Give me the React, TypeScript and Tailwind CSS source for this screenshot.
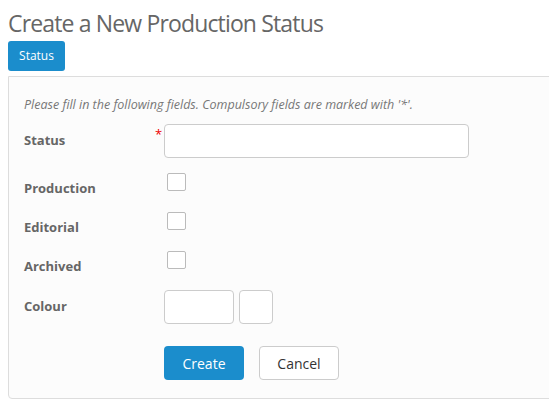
import React from "react";

const font = { fontFamily: '"Open Sans", "Liberation Sans", sans-serif' };

function Row({ label, star, children, h }: { label: string; star?: boolean; children: React.ReactNode; h: string }) {
  return (
    <div className={`flex items-center ${h}`}>
      <div className="w-[131px] shrink-0 text-[13px] font-bold text-[#666]">{label}</div>
      <div className="w-[9px] shrink-0 self-start text-[13px] leading-none text-[#e00] mt-[4px]">{star ? "*" : ""}</div>
      {children}
    </div>
  );
}

function Check({ label }: { label: string }) {
  return (
    <div className="flex h-[24px]">
      <div className="w-[142px] shrink-0 text-[13px] font-bold text-[#666] self-end leading-[18px]">{label}</div>
      <div className="ml-[1px] w-[19px] h-[18px] border border-[#bbb] rounded-[2px] bg-white" />
    </div>
  );
}

export default function App() {
  return (
    <div style={font} className="bg-white w-[549px] h-[417px] overflow-hidden pl-[8px]">
      <h1 className="text-[23px] leading-[32px] pt-[7px] text-[#666] font-medium tracking-[-0.85px]">Create a New Production Status</h1>
      <div className="mt-[2px]">
        <button className="h-[30px] w-[57px] rounded-[3px] bg-[#1b8dcc] text-white text-[12px]">Status</button>
      </div>
      <div className="mt-[5px] w-[560px] h-[323px] border border-[#ddd] rounded-bl-[4px] bg-[#fcfcfc] pl-[15px] pt-[16px]">
        <p className="text-[12.5px] italic text-[#777] leading-[24px]">
          Please fill in the following fields. Compulsory fields are marked with '*'.
        </p>
        <div className="mt-[7px]">
          <Row label="Status" star h="h-[34px]">
            <input className="w-[305px] h-[34px] rounded-[4px] border border-[#ccc] bg-white" />
          </Row>
          <div className="h-[15px]" />
          <Check label="Production" />
          <div className="h-[15px]" />
          <Check label="Editorial" />
          <div className="h-[15px]" />
          <Check label="Archived" />
          <div className="h-[15px]" />
          <Row label="Colour" h="h-[34px]">
            <div className="w-[70px] h-[34px] rounded-[4px] border border-[#ccc] bg-white" />
            <div className="ml-[5px] w-[34px] h-[34px] rounded-[4px] border border-[#ccc] bg-white" />
          </Row>
          <div className="flex mt-[22px] pl-[140px] gap-[15px]">
            <button className="w-[80px] h-[34px] rounded-[4px] bg-[#1b8dcc] text-white text-[14px]">Create</button>
            <button className="w-[80px] h-[34px] rounded-[4px] bg-white border border-[#ccc] text-[#333] text-[14px]">Cancel</button>
          </div>
        </div>
      </div>
    </div>
  );
}
